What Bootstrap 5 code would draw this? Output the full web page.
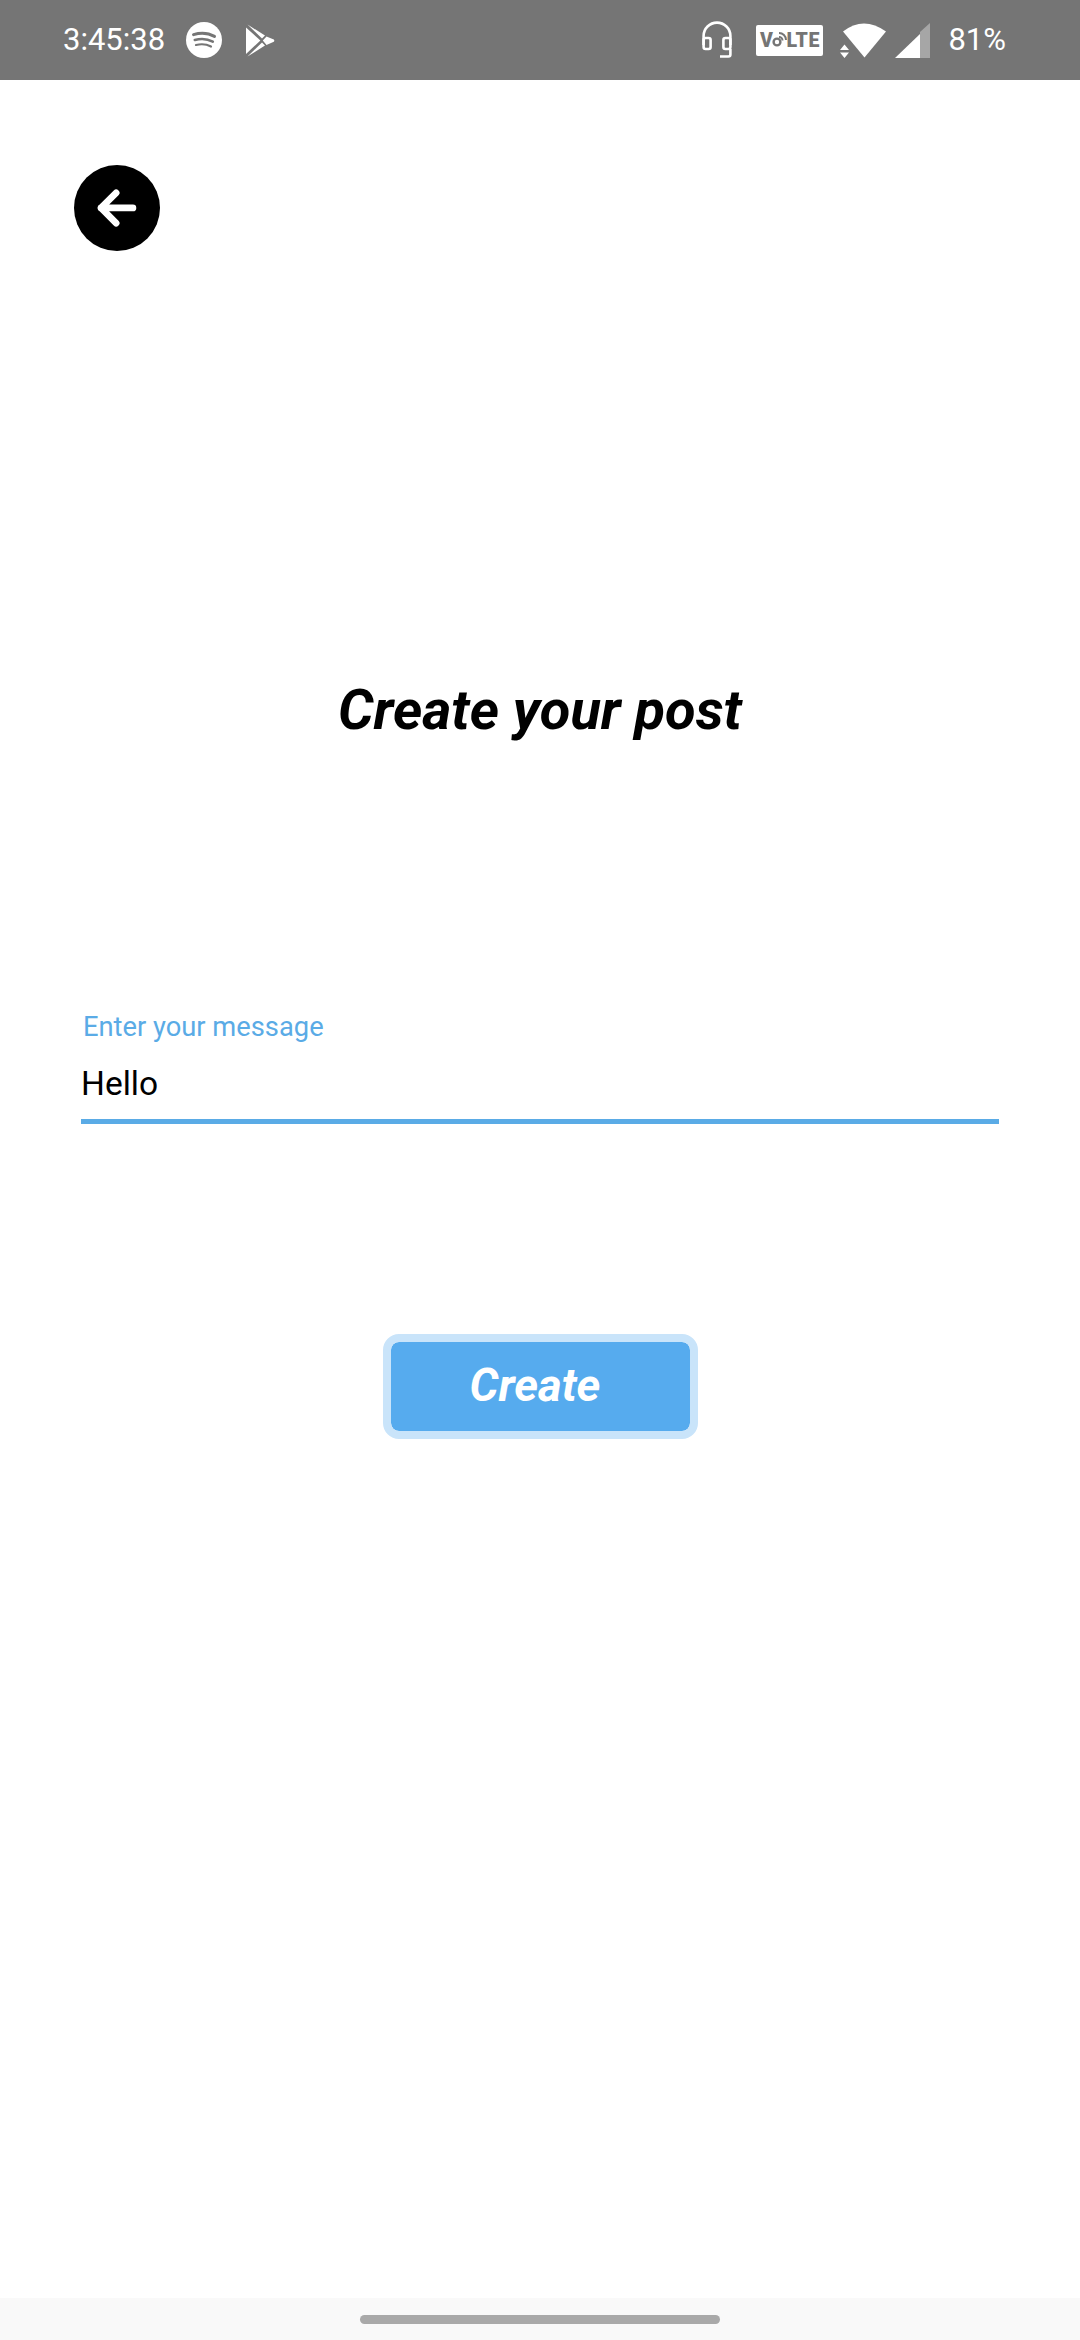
<!DOCTYPE html>
<html lang="en">
<head>
  <meta charset="UTF-8" />
  <title>Create your post</title>
  <link href="https://cdn.jsdelivr.net/npm/bootstrap@5.3.3/dist/css/bootstrap.min.css" rel="stylesheet" />
  <style>
    html, body { height: 100%; }
    body { font-family: Roboto, "Liberation Sans", sans-serif; background: #fff; color: #000; }
    .screen { width: 1080px; height: 2340px; }
    .status-bar { height: 80px; background: #757575; color: #fff; font-size: 31px; padding: 0 74px 0 63px; }
    .status-bar svg { display: block; flex: none; }
    .icon-spotify { margin-left: 21px; }
    .icon-play { margin-left: 23px; }
    .icon-wifi { margin-left: 17px; }
    .battery-text { margin-left: 18px; }
    .volte { width: 67px; height: 31px; background: #fff; color: #757575; border-radius: 2px; font-size: 19.5px; font-weight: 900; line-height: 31px; letter-spacing: .5px; }
    .volte svg { margin: -4px -1px 0 -1px; }
    .back-btn { width: 86px; height: 86px; background: #000; margin: 85px 0 0 74px; }
    .back-btn:hover, .back-btn:active { background: #000 !important; }
    .page-title { font-size: 56px; font-weight: 700; font-style: italic; margin: 0; padding-top: 428px; line-height: 62px; }
    .msg-field { margin: 270px 81px 0 81px; }
    .msg-label { color: #5aabe6; font-size: 27.3px; line-height: 32px; margin: 0 0 0 2px; display: block; }
    .msg-input { border: 0; border-bottom: 5px solid #5aabe6; border-radius: 0; padding: 21px 0 16px; font-size: 33.500px; line-height: 39px; color: #000; background: transparent; box-shadow: none; }
    .msg-input:focus { border-color: #5aabe6; box-shadow: none; }
    .create-btn { width: 315px; height: 105px; background: #56abee; background-clip: padding-box; border: 8px solid #c9e4fa; border-radius: 16px; color: #fff; font-size: 45.5px; font-weight: 700; font-style: italic; padding: 0 10px 0 0; margin-top: 210px; }
    .create-btn:hover, .create-btn:active { background: #56abee !important; border-color: #c9e4fa !important; color: #fff !important; }
    .nav-strip { height: 42px; background: #f9f9f9; }
    .nav-pill-bar { width: 360px; height: 9px; background: #a9a9a9; border-radius: 5px; margin-top: 17px; }
  </style>
</head>
<body>
  <div class="screen d-flex flex-column">

    <div class="status-bar d-flex align-items-center">
      <span>3:45:38</span>
      <!-- spotify -->
      <svg class="icon-spotify" width="36" height="36" viewBox="0 0 36 36">
        <circle cx="18" cy="18" r="18" fill="#fff"/>
        <g fill="none" stroke="#757575" stroke-linecap="round">
          <path d="M7.5 12.6C14 10.6 22.5 11 28.5 14.4" stroke-width="3"/>
          <path d="M8.8 18C14.5 16.4 21.5 16.8 26.8 19.6" stroke-width="2.6"/>
          <path d="M10 23C14.8 21.8 20.5 22.1 25 24.5" stroke-width="2.2"/>
        </g>
      </svg>
      <!-- play store -->
      <svg class="icon-play" width="30" height="33" viewBox="0 0 30 33">
        <path d="M1 3.5 15.4 16.5 1 30Z" fill="#fff"/>
        <path d="M2.5 .5 20 11.6 17 14.6Z" fill="#fff"/>
        <path d="M2.5 32.5 20 21.6 17 18.6Z" fill="#fff"/>
        <path d="M21.5 12.4 28.8 15.4Q30 16.5 28.8 17.8L21.5 21 17.8 16.5Z" fill="#fff"/>
      </svg>

      <!-- headset -->
      <svg class="ms-auto" width="30" height="38" viewBox="0 0 30 38" fill="none" stroke="#fff" stroke-width="2.6">
        <path d="M1.6 24V15a13.4 13.4 0 0 1 26.8 0v9"/>
        <rect x="1.6" y="17" width="7" height="11" rx="2"/>
        <rect x="21.4" y="17" width="7" height="11" rx="2"/>
        <path d="M28.4 28v5.5q0 2-2 2H18"/>
      </svg>
      <!-- volte -->
      <div class="volte d-flex justify-content-center align-items-center ms-4">
        <span>V</span>
        <svg width="15" height="20" viewBox="0 0 15 20" fill="none" stroke="#757575" stroke-width="2">
          <circle cx="5" cy="14" r="3.4" stroke-width="2.4"/>
          <path d="M7 5a7 7 0 0 1 7 7M7 9a3.5 3.5 0 0 1 3.5 3.5"/>
        </svg>
        <span>LTE</span>
      </div>
      <!-- wifi + data arrows -->
      <svg class="icon-wifi" width="47" height="35" viewBox="0 0 47 35">
        <path d="M3 8.5Q23.5 -7.500 46 8.500L24.500 34.500Z" fill="#fff"/>
        <path d="M0 27 4.500 21.500 9 27ZM0 29.500 4.500 35 9 29.500Z" fill="#fff"/>
      </svg>
      <!-- signal -->
      <svg class="ms-2" width="35" height="35" viewBox="0 0 35 35">
        <path d="M0 35 25 11V35Z" fill="#fff"/>
        <path d="M25 9 35 0V35H25Z" fill="#a6a6a6"/>
      </svg>
      <span class="battery-text">81%</span>
    </div>

    <button type="button" class="btn back-btn rounded-circle d-flex align-items-center justify-content-center p-0 border-0" aria-label="Back">
      <svg width="44" height="44" viewBox="0 0 44 44" fill="none" stroke="#fff" stroke-width="8" stroke-linecap="round" stroke-linejoin="round">
        <path d="M41 22H3M21 4 3 22 21 40" transform="translate(3.500 3.500) scale(.84)"/>
      </svg>
    </button>

    <h1 class="page-title text-center">Create your post</h1>

    <div class="msg-field">
      <label class="msg-label" for="message">Enter your message</label>
      <input id="message" type="text" class="form-control msg-input" value="Hello" />
    </div>

    <div class="text-center">
      <button type="button" class="btn create-btn">Create</button>
    </div>

    <div class="flex-grow-1"></div>

    <div class="nav-strip d-flex justify-content-center">
      <div class="nav-pill-bar"></div>
    </div>
  </div>

  <script src="https://cdn.jsdelivr.net/npm/bootstrap@5.3.3/dist/js/bootstrap.bundle.min.js"></script>
</body>
</html>
